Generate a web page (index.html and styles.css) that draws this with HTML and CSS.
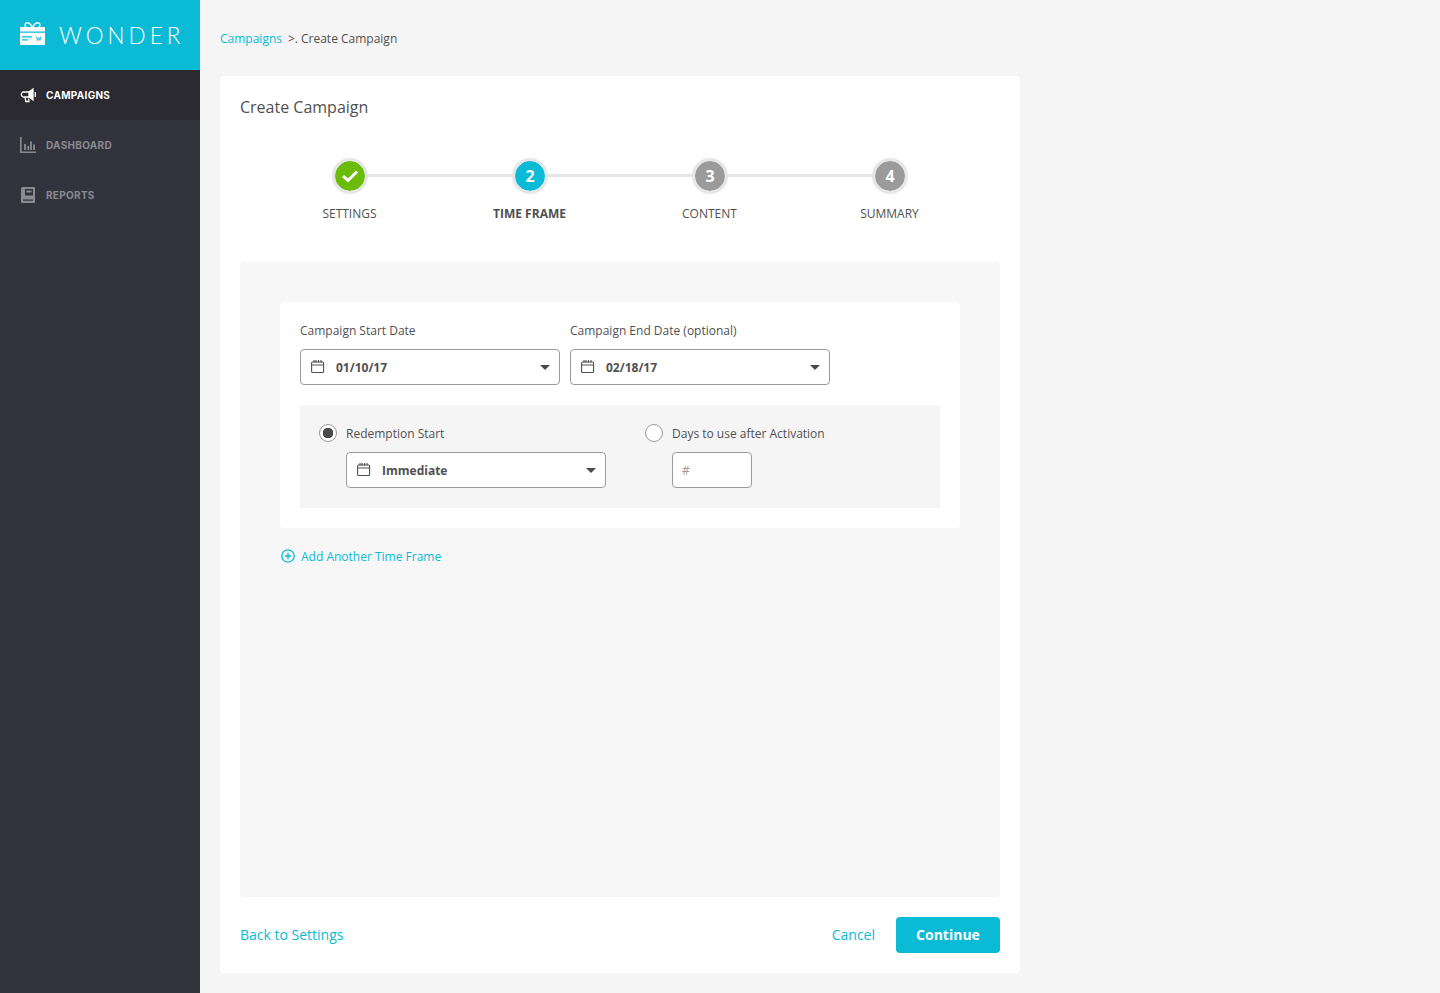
FILE: index.html
```html
<!DOCTYPE html>
<html lang="en">
<head>
<meta charset="utf-8">
<title>Wonder - Create Campaign</title>
<link rel="stylesheet" href="styles.css">
</head>
<body>
<div class="app">
  <aside class="sidebar">
    <div class="brand">
      <svg class="brand-icon" width="25" height="23" viewBox="0 0 25 23">
        <path d="M12.500 5.500C10.500 1.500 8 .4 6.500.8 4.500 1.400 4.500 4.200 6.500 5.500M12.500 5.500C14.500 1.500 17 .4 18.500.8 20.500 1.400 20.500 4.200 18.500 5.500" fill="none" stroke="#fff" stroke-width="1.400"/>
        <path d="M0 6a1 1 0 0 1 1-1h23a1 1 0 0 1 1 1v3.500H0z" fill="#fff"/>
        <path d="M0 10.800h25V22a1 1 0 0 1-1 1H1a1 1 0 0 1-1-1z" fill="#fff"/>
        <path d="M2 14.300h10v1.300H2zM2 17.300h6v1.300H2z" fill="#0bbad4"/>
        <path d="M16.500 14.500l1 4 1.200-3 1.200 3 1-4" fill="none" stroke="#0bbad4" stroke-width=".9"/>
      </svg>
      <span class="brand-name">WONDER</span>
    </div>
    <nav class="nav">
      <a class="nav-item active">
        <svg width="16" height="16" viewBox="0 0 16 16" fill="none" stroke="#fff" stroke-width="1.300">
          <path d="M9 5H3.500A2.300 2.300 0 0 0 1.400 7.500 2.300 2.300 0 0 0 3.500 10H9"/>
          <path d="M9 5 13 2v11L9 10z" fill="#fff"/>
          <path d="M15.300 5v5M5 10l.8 4.500H9L8.500 11.500"/>
        </svg>
        <span>CAMPAIGNS</span>
      </a>
      <a class="nav-item">
        <svg width="16" height="16" viewBox="0 0 16 16" fill="none" stroke="#8a8a90">
          <path d="M.8 0v15.200H16" stroke-width="1.600"/>
          <path d="M5 7v6M8.300 9v4M11 4.500v8.500M14 7.500v5.500" stroke-width="1.800"/>
        </svg>
        <span>DASHBOARD</span>
      </a>
      <a class="nav-item">
        <svg class="book" width="14" height="16" viewBox="0 0 14 16">
          <path d="M1.500 0H13a1 1 0 0 1 1 1v14a1 1 0 0 1-1 1H1.500A1.500 1.500 0 0 1 0 14.500v-13A1.500 1.500 0 0 1 1.500 0z" fill="#8a8a90"/>
          <path d="M2 12.500h10v1.200H2zM4 2h8v6.500H4z" fill="#32333d"/>
          <path d="M5.500 3.500h5v2h-5z" fill="#8a8a90"/>
        </svg>
        <span>REPORTS</span>
      </a>
    </nav>
  </aside>

  <main class="main">
    <div class="breadcrumb"><a class="link">Campaigns</a><span class="crumb-sep">&gt;.</span><span>Create Campaign</span></div>

    <section class="card">
      <h1 class="title">Create Campaign</h1>

      <ol class="steps">
        <li class="step done">
          <span class="dot"><svg width="18" height="14" viewBox="0 0 18 14" fill="none" stroke="#fff" stroke-width="3"><path d="M2 7l5 4.500L16 2.500"/></svg></span>
          <span class="step-label">SETTINGS</span>
        </li>
        <li class="step current">
          <span class="dot">2</span>
          <span class="step-label">TIME FRAME</span>
        </li>
        <li class="step">
          <span class="dot">3</span>
          <span class="step-label">CONTENT</span>
        </li>
        <li class="step">
          <span class="dot">4</span>
          <span class="step-label">SUMMARY</span>
        </li>
      </ol>

      <div class="panel">
        <div class="form-card">
          <div class="date-row">
            <div class="field">
              <label class="label">Campaign Start Date</label>
              <div class="select">
                <svg class="cal" width="14" height="14" viewBox="0 0 14 14" fill="none" stroke="#505050" stroke-width="1.100"><rect x=".6" y="2" width="12" height="10.500" rx="1"/><path d="M.6 5h12M3 0v2.500M5 0v2.500M7.500 0v2.500M10 0v2.500"/></svg>
                <span class="value">01/10/17</span>
                <span class="caret"></span>
              </div>
            </div>
            <div class="field">
              <label class="label">Campaign End Date (optional)</label>
              <div class="select">
                <svg class="cal" width="14" height="14" viewBox="0 0 14 14" fill="none" stroke="#505050" stroke-width="1.100"><rect x=".6" y="2" width="12" height="10.500" rx="1"/><path d="M.6 5h12M3 0v2.500M5 0v2.500M7.500 0v2.500M10 0v2.500"/></svg>
                <span class="value">02/18/17</span>
                <span class="caret"></span>
              </div>
            </div>
          </div>

          <div class="redemption">
            <div class="option option-start">
              <div class="radio-line"><span class="radio checked"></span><span class="radio-text">Redemption Start</span></div>
              <div class="select">
                <svg class="cal" width="14" height="14" viewBox="0 0 14 14" fill="none" stroke="#505050" stroke-width="1.100"><rect x=".6" y="2" width="12" height="10.500" rx="1"/><path d="M.6 5h12M3 0v2.500M5 0v2.500M7.500 0v2.500M10 0v2.500"/></svg>
                <span class="value">Immediate</span>
                <span class="caret"></span>
              </div>
            </div>
            <div class="option">
              <div class="radio-line"><span class="radio"></span><span class="radio-text">Days to use after Activation</span></div>
              <div class="number-input">#</div>
            </div>
          </div>
        </div>

        <a class="add-link">
          <svg width="14" height="14" viewBox="0 0 14 14" fill="none" stroke="#0bbad4" stroke-width="1.300"><circle cx="7" cy="7" r="6.200"/><path d="M3.800 7h6.400M7 3.800v6.400"/></svg>
          <span>Add Another Time Frame</span>
        </a>
      </div>

      <footer class="actions">
        <a class="link back">Back to Settings</a>
        <a class="link cancel">Cancel</a>
        <button class="continue" type="button">Continue</button>
      </footer>
    </section>
  </main>
</div>
</body>
</html>
```
FILE: styles.css
```css
* { box-sizing: border-box; }
html, body { margin: 0; height: 100%; }
body {
  font-family: "Open Sans", "Liberation Sans", sans-serif;
  color: #505050;
  background: #f5f5f5;
  overflow: hidden;
}
.app { display: flex; height: 993px; }

/* Sidebar */
.sidebar { width: 200px; flex: none; background: #32333d; }
.brand {
  height: 70px;
  background: #0bbad4;
  display: flex;
  align-items: center;
  padding-left: 20px;
  gap: 14px;
  color: #fff;
}
.brand-icon { flex: none; margin-top: -4px; }
.brand-name {
  font-family: Lato, "Open Sans", sans-serif;
  font-weight: 300;
  font-size: 22.500px;
  letter-spacing: 4px;
  line-height: 30px;
  margin-top: 2px;
}
.nav-item {
  height: 50px;
  display: flex;
  align-items: center;
  padding-left: 20px;
  gap: 10px;
  font-family: Inter, "Open Sans", sans-serif;
  font-size: 10px;
  font-weight: 700;
  letter-spacing: .3px;
  color: #8a8a90;
}
.nav-item svg { flex: none; }
.nav-item svg.book { margin-left: 1px; margin-right: 1px; }
.nav-item.active { background: #2a2a30; color: #fff; }

/* Main */
.main { width: 840px; padding: 0 20px; display: flex; flex-direction: column; }
.breadcrumb {
  height: 76px;
  padding-top: 30px;
  font-size: 12px;
  line-height: 18px;
  display: flex;
}
.crumb-sep { margin: 0 3px 0 6px; }
.link { color: #0bbad4; }

.card {
  height: 897px;
  background: #fff;
  border-radius: 4px;
  padding: 20px;
  display: flex;
  flex-direction: column;
}
.title {
  margin: 0;
  font-size: 16px;
  font-weight: 400;
  line-height: 22px;
  color: #505050;
}

/* Stepper */
.steps {
  list-style: none;
  margin: 40px 0 0;
  padding: 0 20px;
  height: 104px;
  display: grid;
  grid-template-columns: repeat(4, 180px);
  align-items: start;
}
.step {
  position: relative;
  display: flex;
  flex-direction: column;
  align-items: center;
}
.step::after {
  content: "";
  position: absolute;
  left: 50%;
  width: 100%;
  top: 16px;
  height: 3px;
  background: #e6e6e6;
}
.step:last-child::after { display: none; }
.dot {
  position: relative;
  z-index: 1;
  flex: none;
  width: 36px;
  height: 36px;
  border: 3px solid #e6e6e6;
  border-radius: 50%;
  background: #9b9b9b;
  color: #fff;
  font-size: 16px;
  font-weight: 700;
  display: flex;
  align-items: center;
  justify-content: center;
  background-clip: padding-box;
}
.step.done .dot { background-color: #6bbb0a; }
.step.current .dot { background-color: #0bbad4; }
.step-label {
  margin-top: 11px;
  font-size: 12px;
  line-height: 18px;
  transform: translateX(-.5px);
}
.step.current .step-label { font-weight: 700; }

/* Panel */
.panel {
  flex: 1;
  background: #f7f7f7;
  border-radius: 4px;
  padding: 40px;
}
.form-card {
  background: #fff;
  border-radius: 4px;
  padding: 20px;
  height: 226px;
}
.date-row { display: flex; gap: 10px; }
.field { width: 260px; }
.label {
  display: block;
  font-size: 12px;
  line-height: 18px;
  margin-bottom: 9px;
}
.select {
  height: 36px;
  background: #fff;
  border: 1px solid #9b9b9b;
  border-radius: 4px;
  display: flex;
  align-items: center;
  padding: 0 9px 0 10px;
  gap: 11px;
}
.cal { flex: none; }
.value { flex: 1; font-size: 12px; font-weight: 700; }
.caret {
  width: 0;
  height: 0;
  border-left: 5px solid transparent;
  border-right: 5px solid transparent;
  border-top: 5px solid #4a4a4a;
}

/* Redemption */
.redemption {
  margin-top: 20px;
  height: 103px;
  background: #f5f5f5;
  padding: 19px 19px 0;
  display: flex;
}
.option-start { width: 326px; flex: none; }
.option-start .select { width: 260px; margin-left: 27px; }
.radio-line { display: flex; align-items: center; height: 18px; margin-bottom: 10px; }
.radio {
  width: 18px;
  height: 18px;
  flex: none;
  border: 1px solid #9b9b9b;
  border-radius: 50%;
  background: #fff;
  margin-right: 9px;
}
.radio.checked { background: radial-gradient(circle, #4a4a4a 0 5px, #fff 5.500px); }
.radio-text { font-size: 12px; line-height: 18px; margin-top: 2px; }
.number-input {
  width: 80px;
  height: 36px;
  margin-left: 27px;
  background: #fff;
  border: 1px solid #9b9b9b;
  border-radius: 4px;
  padding-left: 9px;
  font-size: 12px;
  line-height: 36px;
  color: #9b9b9b;
}

.add-link {
  display: flex;
  align-items: center;
  gap: 6px;
  margin-top: 19px;
  padding-left: 1px;
  height: 18px;
  font-size: 12px;
  color: #0bbad4;
}

/* Footer */
.actions {
  margin-top: 20px;
  height: 36px;
  display: flex;
  align-items: center;
  font-size: 14px;
  padding-bottom: 1px;
}
.back { margin-right: auto; }
.cancel { margin-right: 21px; }
.continue {
  width: 104px;
  height: 36px;
  margin-bottom: -1px;
  border: 0;
  border-radius: 4px;
  background: #0bbad4;
  color: #fff;
  font-family: inherit;
  font-size: 14px;
  font-weight: 700;
  padding: 0 0 2px;
}
```
